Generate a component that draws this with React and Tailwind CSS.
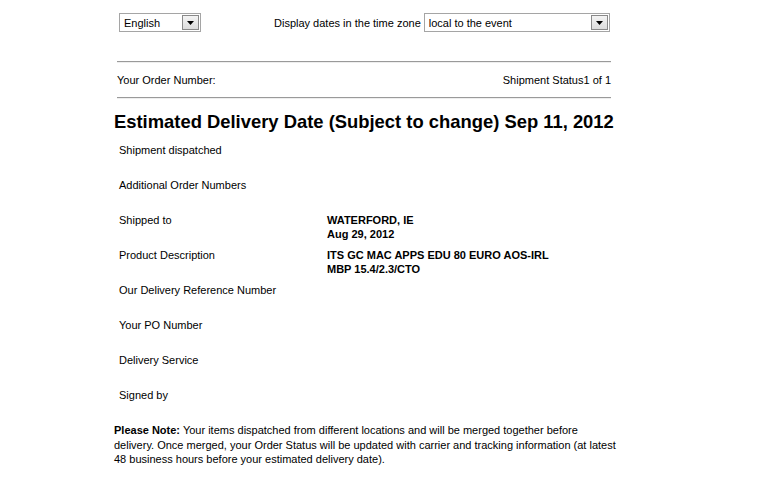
import React from "react";

function Select({ value, width }) {
  return (
    <div
      className={`flex items-center h-[19px] border border-[#a5a5a5] bg-white ${width}`}
    >
      <span className="flex-1 pl-[4px] text-[11px] leading-[14px] text-black whitespace-nowrap">{value}</span>
      <div className="mr-[1px] w-[17px] h-[15px] border border-[#8a8a8a] bg-gradient-to-b from-[#f4f4f4] to-[#dcdcdc] flex items-center justify-center">
        <svg width="7" height="4" viewBox="0 0 7 4">
          <path d="M0 0 H7 L3.5 4 Z" fill="#000" />
        </svg>
      </div>
    </div>
  );
}

const rows = [
  ["Shipment dispatched", []],
  ["Additional Order Numbers", []],
  ["Shipped to", ["WATERFORD, IE", "Aug 29, 2012"]],
  ["Product Description", ["ITS GC MAC APPS EDU 80 EURO AOS-IRL", "MBP 15.4/2.3/CTO"]],
  ["Our Delivery Reference Number", []],
  ["Your PO Number", []],
  ["Delivery Service", []],
  ["Signed by", []],
];

function Hr() {
  return <div className="ml-[4px] w-[494px] h-[2px] border-t border-[#9a9a9a] border-b border-b-[#eeeeee]" />;
}

export default function App() {
  return (
    <div
      className="w-[762px] h-[502px] bg-white text-black text-[11px] leading-[14px]"
      style={{ fontFamily: '"Liberation Sans", Arial, sans-serif' }}
    >
      <div className="pl-[113px] w-[615px] pt-[13px]">
        <div className="flex items-center h-[19px]">
          <div className="ml-[6px]">
            <Select value="English" width="w-[82px]" />
          </div>
          <span className="ml-[73px] mr-[3px] whitespace-nowrap">Display dates in the time zone</span>
          <Select value="local to the event" width="w-[186px]" />
        </div>
        <div className="mt-[29px]">
          <Hr />
        </div>
        <div className="flex justify-between ml-[4px] w-[494px] mt-[10px] h-[14px]">
          <span>Your Order Number:</span>
          <span>Shipment Status1 of 1</span>
        </div>
        <div className="mt-[10px]">
          <Hr />
        </div>
        <h1 className="mt-[12px] ml-[1px] text-[18.4px] leading-[22px] font-bold whitespace-nowrap">
          Estimated Delivery Date (Subject to change) Sep 11, 2012
        </h1>
        <div className="mt-[10px]">
          {rows.map(([label, vals]) => (
            <div key={label} className="flex h-[35px]">
              <div className="w-[214px] pl-[6px] whitespace-nowrap">{label}</div>
              <div className="font-bold whitespace-nowrap">
                {vals.map((v) => (
                  <div key={v}>{v}</div>
                ))}
              </div>
            </div>
          ))}
        </div>
        <p className="mt-0 ml-[1px] w-[502px] leading-[14.5px]">
          <b>Please Note:</b> Your items dispatched from different locations and will be merged together before delivery. Once merged, your Order Status will be updated with carrier and tracking information (at latest 48 business hours before your estimated delivery date).
        </p>
      </div>
    </div>
  );
}
